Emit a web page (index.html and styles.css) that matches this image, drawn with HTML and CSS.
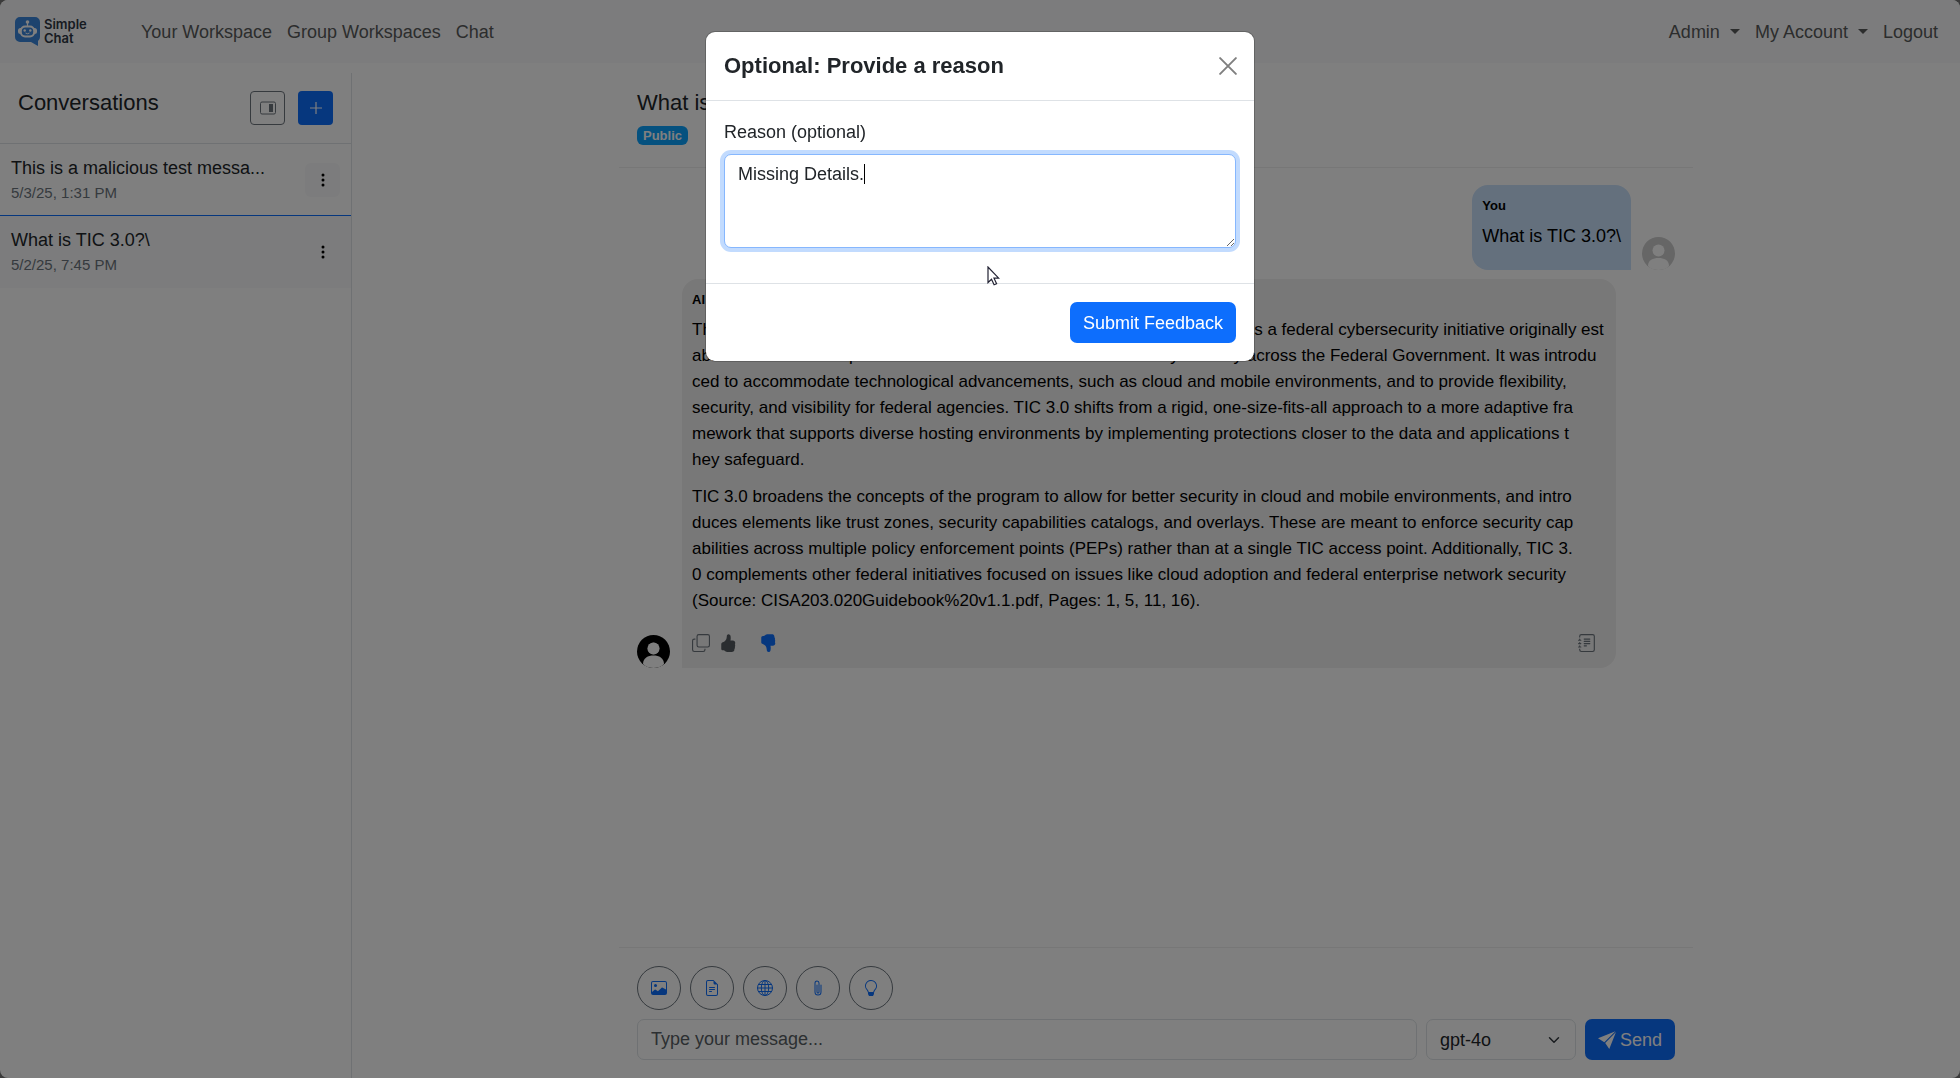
FILE: index.html
```
<!DOCTYPE html>
<html lang="en">
<head>
<meta charset="utf-8">
<title>Simple Chat</title>
<meta name="viewport" content="width=device-width, initial-scale=1">
<link rel="stylesheet" href="styles.css">
</head>
<body>
<div class="app">
  <header class="navbar">
    <a class="brand" href="#" aria-label="Simple Chat">
      <svg class="brand-mark" viewBox="0 0 25 29" aria-hidden="true">
        <path fill="#3a86dc" d="M5 0h15a5 5 0 0 1 5 5v15a5 5 0 0 1-2 4v5l-7-4H5a5 5 0 0 1-5-5V5a5 5 0 0 1 5-5z"/>
        <circle cx="12.500" cy="5" r="1.800" fill="#fff"/>
        <path d="M12.500 5v4" stroke="#fff" stroke-width="1.200"/>
        <rect x="3" y="11" width="19" height="6" rx="2.500" fill="#fff"/>
        <rect x="5" y="8.500" width="15" height="12" rx="5" fill="#fff"/>
        <rect x="6.800" y="10.500" width="11.400" height="8" rx="3.500" fill="#3a86dc"/>
        <circle cx="9.700" cy="13.500" r="1.200" fill="#fff"/>
        <circle cx="15.300" cy="13.500" r="1.200" fill="#fff"/>
        <path d="M10.500 16q2 1.500 4 0" fill="none" stroke="#fff" stroke-width="1"/>
      </svg>
      <span class="brand-name">Simple<br>Chat</span>
    </a>
    <nav class="nav-links">
      <a href="#">Your Workspace</a>
      <a href="#">Group Workspaces</a>
      <a href="#">Chat</a>
    </nav>
    <nav class="nav-links nav-account">
      <a class="has-menu" href="#">Admin</a>
      <a class="has-menu" href="#">My Account</a>
      <a href="#">Logout</a>
    </nav>
  </header>

  <div class="workspace">
    <aside class="sidebar">
      <div class="sidebar-head">
        <h2 class="heading">Conversations</h2>
        <div class="sidebar-actions">
          <button class="square-btn outline" type="button" aria-label="Toggle layout">
            <svg width="16" height="16" viewBox="0 0 16 16" fill="none"><rect x=".5" y="2" width="15" height="12" rx="1.500" stroke="currentColor"/><path fill="currentColor" d="M9 4h4v8H9z"/></svg>
          </button>
          <button class="square-btn primary" type="button" aria-label="New conversation">
            <svg width="16" height="16" viewBox="0 0 16 16"><path d="M8 2v12M2 8h12" stroke="currentColor" stroke-width="1.200"/></svg>
          </button>
        </div>
      </div>
      <ul class="conversations">
        <li class="conversation">
          <div><span class="title">This is a malicious test messa...</span><span class="date">5/3/25, 1:31 PM</span></div>
          <button class="square-btn dots shaded" type="button" aria-label="Conversation options">
            <svg width="16" height="16" viewBox="0 0 16 16" fill="currentColor"><circle cx="8" cy="3" r="1.500"/><circle cx="8" cy="8" r="1.500"/><circle cx="8" cy="13" r="1.500"/></svg>
          </button>
        </li>
        <li class="conversation active">
          <div><span class="title">What is TIC 3.0?\</span><span class="date">5/2/25, 7:45 PM</span></div>
          <button class="square-btn dots" type="button" aria-label="Conversation options">
            <svg width="16" height="16" viewBox="0 0 16 16" fill="currentColor"><circle cx="8" cy="3" r="1.500"/><circle cx="8" cy="8" r="1.500"/><circle cx="8" cy="13" r="1.500"/></svg>
          </button>
        </li>
      </ul>
    </aside>

    <main class="chat">
      <div class="chat-head">
        <h2 class="heading">What is TIC 3.0?\</h2>
        <span class="badge">Public</span>
      </div>

      <div class="messages">
        <article class="message mine">
          <div class="bubble">
            <div class="sender">You</div>
            <p class="own-text">What is TIC 3.0?\</p>
          </div>
          <svg class="avatar" viewBox="0 0 33 33" aria-hidden="true"><circle cx="16.500" cy="16.500" r="16.500" fill="#ccc"/><circle cx="16.500" cy="13.500" r="6" fill="#fff"/><path fill="#fff" d="M6 29c0-6 5-8 10.500-8S27 23 27 29c-3 3-7 4-10.500 4S9 32 6 29z"/></svg>
        </article>

        <article class="message">
          <svg class="avatar" viewBox="0 0 33 33" aria-hidden="true"><circle cx="16.500" cy="16.500" r="16.500" fill="#000"/><circle cx="16.500" cy="13.500" r="6" fill="#808080"/><path fill="#fff" d="M6 29c0-6 5-8.500 10.500-8.500S27 23 27 29c-3 3-7 4-10.500 4S9 32 6 29z"/><circle cx="16.500" cy="13.500" r="6" fill="#fff"/></svg>
          <div class="bubble">
            <div class="sender">AI</div>
            <p>The Trusted Internet Connections (TIC) 3.0, which is maintained by CISA, is a federal cybersecurity initiative originally est<br>ablished in 2007 to optimize and enhance network and boundary security across the Federal Government. It was introdu<br>ced to accommodate technological advancements, such as cloud and mobile environments, and to provide flexibility,<br>security, and visibility for federal agencies. TIC 3.0 shifts from a rigid, one-size-fits-all approach to a more adaptive fra<br>mework that supports diverse hosting environments by implementing protections closer to the data and applications t<br>hey safeguard.</p>
            <p>TIC 3.0 broadens the concepts of the program to allow for better security in cloud and mobile environments, and intro<br>duces elements like trust zones, security capabilities catalogs, and overlays. These are meant to enforce security cap<br>abilities across multiple policy enforcement points (PEPs) rather than at a single TIC access point. Additionally, TIC 3.<br>0 complements other federal initiatives focused on issues like cloud adoption and federal enterprise network security<br>(Source: CISA203.020Guidebook%20v1.1.pdf, Pages: 1, 5, 11, 16).</p>
            <div class="feedback">
              <button type="button" class="copy" aria-label="Copy"><svg width="18" height="18" viewBox="0 0 16 16" fill="currentColor"><path fill-rule="evenodd" d="M4 2a2 2 0 0 1 2-2h8a2 2 0 0 1 2 2v8a2 2 0 0 1-2 2H6a2 2 0 0 1-2-2zm2-1a1 1 0 0 0-1 1v8a1 1 0 0 0 1 1h8a1 1 0 0 0 1-1V2a1 1 0 0 0-1-1zM2 5a1 1 0 0 0-1 1v8a1 1 0 0 0 1 1h8a1 1 0 0 0 1-1v-1h1v1a2 2 0 0 1-2 2H2a2 2 0 0 1-2-2V6a2 2 0 0 1 2-2h1v1z"/></svg></button>
              <button type="button" class="up" aria-label="Thumbs up"><svg width="18" height="18" viewBox="0 0 16 16" fill="currentColor"><path d="M6.956 1.745C7.021.81 7.908.087 8.864.325l.261.066c.463.116.874.456 1.012.965.22.816.533 2.511.062 4.510a10 10 0 0 1 .443-.051c.713-.065 1.669-.072 2.516.210.518.173.994.681 1.200 1.273.184.532.160 1.162-.234 1.733q.086.180.138.363c.077.270.113.567.113.856s-.036.586-.113.856c-.039.135-.090.273-.160.404.169.387.107.819-.003 1.148a3.200 3.200 0 0 1-.488.901c.054.152.076.312.076.465 0 .305-.089.625-.253.912C13.100 15.522 12.437 16 11.500 16H8c-.605 0-1.070-.081-1.466-.218a4.800 4.800 0 0 1-.970-.484l-.048-.030c-.504-.307-.999-.609-2.068-.722C2.682 14.464 2 13.846 2 13V9c0-.850.685-1.432 1.357-1.615.849-.232 1.574-.787 2.132-1.410.560-.627.914-1.280 1.039-1.639.199-.575.356-1.539.428-2.590z"/></svg></button>
              <button type="button" class="down" aria-label="Thumbs down"><svg width="18" height="18" viewBox="0 0 16 16" fill="currentColor"><path d="M6.956 14.534c.065.936.952 1.659 1.908 1.420l.261-.065a1.380 1.380 0 0 0 1.012-.965c.220-.816.533-2.512.062-4.510q.205.030.443.051c.713.065 1.669.071 2.516-.211.518-.173.994-.680 1.200-1.272a1.900 1.900 0 0 0-.234-1.734c.058-.118.103-.242.138-.362.077-.270.113-.568.113-.856 0-.290-.036-.586-.113-.857a2 2 0 0 0-.160-.403c.169-.387.107-.820-.003-1.149a3.200 3.200 0 0 0-.488-.900c.054-.153.076-.313.076-.465a1.860 1.860 0 0 0-.253-.912C13.100.757 12.437.280 11.500.280H8c-.605 0-1.070.080-1.466.217a4.800 4.800 0 0 0-.970.485l-.048.029c-.504.308-.999.610-2.068.723C2.682 1.815 2 2.434 2 3.279v4c0 .851.685 1.433 1.357 1.616.849.232 1.574.787 2.132 1.410.560.626.914 1.280 1.039 1.638.199.575.356 1.540.428 2.591"/></svg></button>
              <button type="button" class="sources" aria-label="Show sources"><svg width="18" height="18" viewBox="0 0 16 16" fill="currentColor"><path d="M5 10.500a.5.500 0 0 1 .5-.500h2a.5.500 0 0 1 0 1h-2a.5.500 0 0 1-.5-.500m0-2a.5.500 0 0 1 .5-.500h5a.5.500 0 0 1 0 1h-5a.5.500 0 0 1-.5-.500m0-2a.5.500 0 0 1 .5-.500h5a.5.500 0 0 1 0 1h-5a.5.500 0 0 1-.5-.500m0-2a.5.500 0 0 1 .5-.500h5a.5.500 0 0 1 0 1h-5a.5.500 0 0 1-.5-.500"/><path d="M3 0h10a2 2 0 0 1 2 2v12a2 2 0 0 1-2 2H3a2 2 0 0 1-2-2v-1h1v1a1 1 0 0 0 1 1h10a1 1 0 0 0 1-1V2a1 1 0 0 0-1-1H3a1 1 0 0 0-1 1v1H1V2a2 2 0 0 1 2-2"/><path d="M1 5v-.500a.5.500 0 0 1 1 0V5h.5a.5.500 0 0 1 0 1h-2a.5.500 0 0 1 0-1zm0 3v-.500a.5.500 0 0 1 1 0V8h.5a.5.500 0 0 1 0 1h-2a.5.500 0 0 1 0-1zm0 3v-.500a.5.500 0 0 1 1 0v.500h.5a.5.500 0 0 1 0 1h-2a.5.500 0 0 1 0-1z"/></svg></button>
            </div>
          </div>
        </article>
      </div>

      <form class="composer">
        <div class="tools">
          <button type="button" aria-label="Generate image"><svg width="16" height="16" viewBox="0 0 16 16" fill="currentColor"><path d="M6.002 5.500a1.500 1.500 0 1 1-3 0 1.500 1.500 0 0 1 3 0"/><path d="M2.002 1a2 2 0 0 0-2 2v10a2 2 0 0 0 2 2h12a2 2 0 0 0 2-2V3a2 2 0 0 0-2-2zm12 1a1 1 0 0 1 1 1v6.500l-3.777-1.947a.5.500 0 0 0-.577.093l-3.710 3.710-2.660-1.772a.5.500 0 0 0-.630.062L1.002 12V3a1 1 0 0 1 1-1z"/></svg></button>
          <button type="button" aria-label="Search documents"><svg width="16" height="16" viewBox="0 0 16 16" fill="currentColor"><path d="M5.500 7a.5.500 0 0 0 0 1h5a.5.500 0 0 0 0-1zM5 9.500a.5.500 0 0 1 .5-.500h5a.5.500 0 0 1 0 1h-5a.5.500 0 0 1-.5-.500m0 2a.5.500 0 0 1 .5-.500h2a.5.500 0 0 1 0 1h-2a.5.500 0 0 1-.5-.500"/><path d="M9.500 0H4a2 2 0 0 0-2 2v12a2 2 0 0 0 2 2h8a2 2 0 0 0 2-2V4.500zm0 1v2A1.500 1.500 0 0 0 11 4.500h2V14a1 1 0 0 1-1 1H4a1 1 0 0 1-1-1V2a1 1 0 0 1 1-1z"/></svg></button>
          <button type="button" aria-label="Search the web"><svg width="16" height="16" viewBox="0 0 16 16" fill="none" stroke="currentColor"><circle cx="8" cy="8" r="7.500"/><ellipse cx="8" cy="8" rx="3.700" ry="7.500"/><path d="M8 .5v15M.5 8h15M1.500 4.500h13M1.500 11.500h13"/></svg></button>
          <button type="button" aria-label="Attach file"><svg width="16" height="16" viewBox="0 0 16 16" fill="currentColor"><path d="M4.500 3a2.500 2.500 0 0 1 5 0v9a1.500 1.500 0 0 1-3 0V5a.5.500 0 0 1 1 0v7a.5.500 0 0 0 1 0V3a1.500 1.500 0 1 0-3 0v9a2.500 2.500 0 0 0 5 0V5a.5.500 0 0 1 1 0v7a3.500 3.500 0 1 1-7 0z"/></svg></button>
          <button type="button" aria-label="Prompts"><svg width="16" height="16" viewBox="0 0 16 16" fill="currentColor"><path d="M2 6a6 6 0 1 1 10.174 4.310c-.203.196-.359.400-.453.619l-.762 1.769A.5.500 0 0 1 10.500 13h-5a.5.500 0 0 1-.460-.302l-.761-1.770a2 2 0 0 0-.453-.618A5.980 5.980 0 0 1 2 6m6-5a5 5 0 0 0-3.479 8.592c.263.254.514.564.676.941L5.830 12h4.342l.632-1.467c.162-.377.413-.687.676-.941A5 5 0 0 0 8 1M5 13h6v1l-1 2H6l-1-2z"/></svg></button>
        </div>
        <div class="compose-row">
          <input class="field" type="text" placeholder="Type your message..." aria-label="Message">
          <select class="field model" aria-label="Model"><option>gpt-4o</option></select>
          <button class="btn primary" type="button"><svg width="18" height="18" viewBox="0 0 16 16" fill="currentColor"><path d="M0 6.500L15.500.300 5.600 9.900zM6.400 10.600L16 .800 10 16z"/></svg>Send</button>
        </div>
      </form>
    </main>
  </div>
</div>

<div class="backdrop">
  <form class="modal" role="dialog" aria-modal="true" aria-labelledby="feedback-title">
    <div class="modal-head">
      <h1 id="feedback-title">Optional: Provide a reason</h1>
      <button class="close" type="button" aria-label="Close"><svg width="18" height="18" viewBox="0 0 16 16" fill="none"><path d="M1 1l14 14M15 1L1 15" stroke="currentColor" stroke-width="1.700" stroke-linecap="round"/></svg></button>
    </div>
    <div class="modal-body">
      <label for="reason">Reason (optional)</label>
      <div class="reason-box">
        <textarea id="reason" rows="3">Missing Details.</textarea>
        <span class="caret"></span>
      </div>
    </div>
    <div class="modal-foot">
      <button class="btn primary" type="button">Submit Feedback</button>
    </div>
    <svg class="pointer" width="13" height="20" viewBox="0 0 13 20" aria-hidden="true"><path d="M1 1v15.500l3.500-3.300 2.600 5.600 2.500-1.100-2.600-5.500h4.700z" fill="#fff" stroke="#223" stroke-width="1.200"/></svg>
  </form>
</div>
</body>
</html>
```
FILE: styles.css
```
* { box-sizing: border-box; }

html { background: #777; }

body {
  margin: 0;
  color: #212529;
  font: 18px/26px "Liberation Sans", Arial, sans-serif;
}

h1, h2, p, ul { margin: 0; padding: 0; font-weight: 400; }
a { color: inherit; text-decoration: none; }
button, input, select, textarea { font: inherit; color: inherit; }
button {
  display: flex;
  align-items: center;
  justify-content: center;
  padding: 0;
  border: 0;
  background: none;
}
svg { display: block; flex: none; }

.app {
  display: flex;
  flex-direction: column;
  height: 100vh;
  overflow: hidden;
  border-radius: 8px;
  background: #fff;
}

/* Top bar */
.navbar {
  display: flex;
  align-items: center;
  height: 63px;
  flex: none;
  padding: 0 22px 0 15px;
  background: #f8f9fa;
  color: #595a5b;
}
.brand { display: flex; gap: 4px; width: 126px; }
.brand-mark { width: 25px; height: 29px; }
.brand-name {
  color: #2f3644;
  font: 600 13px/14px Inter, "Liberation Sans", sans-serif;
}
.nav-links { display: flex; gap: 15px; }
.nav-account { margin-left: auto; }
.has-menu { display: flex; align-items: center; gap: 10px; }
.has-menu::after {
  content: "";
  border: 5px solid transparent;
  border-top-color: currentColor;
  border-bottom: 0;
}

.workspace { display: flex; flex: 1; min-height: 0; padding-top: 10px; }

/* Conversation list */
.sidebar { width: 352px; flex: none; border-right: 1px solid #dee2e6; }
.sidebar-head {
  display: flex;
  justify-content: space-between;
  height: 71px;
  padding: 17px 18px;
  border-bottom: 1px solid #dee2e6;
}
.heading { font-size: 22px; line-height: 26px; }
.sidebar-actions { display: flex; gap: 13px; padding-top: 1px; }
.square-btn { width: 35px; height: 34px; border-radius: 4px; }
.outline { border: 1px solid #6c757d; color: #6c757d; }
.primary { background: #0d6efd; color: #fff; }
.dots { color: #000; border-radius: 6px; }
.shaded { background: #f8f9fa; }
.conversations { list-style: none; }
.conversation {
  display: flex;
  align-items: center;
  justify-content: space-between;
  height: 72px;
  padding: 0 11px;
  border-bottom: 1px solid #0d6efd;
}
.conversation.active { background: #f8f9fa; border-bottom-color: #f8f9fa; }
.title, .date { display: block; }
.date { color: #6c757d; font-size: 15px; line-height: 24px; }

/* Chat */
.chat {
  display: flex;
  flex-direction: column;
  width: 100%;
  max-width: 1074px;
  min-width: 0;
  margin: 0 auto;
}
.chat-head {
  display: flex;
  flex-direction: column;
  align-items: flex-start;
  gap: 10px;
  height: 95px;
  padding: 17px 18px;
  border-bottom: 1px solid #eee;
}
.badge {
  padding: 0 6px;
  border-radius: 6px;
  background: #0aa2ff;
  color: #fff;
  font-size: 13px;
  font-weight: 700;
  line-height: 19px;
}
.messages {
  display: flex;
  flex-direction: column;
  gap: 9px;
  flex: 1;
  min-height: 0;
  padding: 17px 18px;
  color: #000;
}
.message { display: flex; align-items: flex-end; gap: 12px; }
.mine { justify-content: flex-end; gap: 11px; }
.avatar { width: 33px; height: 33px; }
.bubble {
  max-width: 90%;
  padding: 12px 10px 16px;
  border-radius: 16px 16px 16px 0;
  background: #f1f0f0;
}
.message:not(.mine) .bubble { width: 90%; }
.mine .bubble { padding-bottom: 21px; border-radius: 16px 16px 0 16px; background: #c8e0fa; }
.sender { margin-bottom: 8px; font-size: 13px; font-weight: 700; line-height: 18px; }
.bubble p { margin-bottom: 11px; font-size: 17px; white-space: nowrap; }
.bubble .own-text { margin: 0; font-size: 18px; }
.feedback { display: flex; margin-top: 20px; color: #6c757d; }
.up { margin-left: 9px; color: #555b60; }
.down { margin-left: 22px; color: #0d6efd; }
.sources { margin-left: auto; margin-right: 10px; }

/* Composer */
.composer { padding: 18px; border-top: 1px solid #eee; }
.tools { display: flex; gap: 9px; margin-bottom: 9px; }
.tools button {
  width: 44px;
  height: 44px;
  border: 1px solid #6c757d;
  border-radius: 50%;
  color: #0d6efd;
}
.compose-row { display: flex; gap: 9px; }
.field {
  flex: 1;
  min-width: 0;
  height: 41px;
  padding: 0 13px;
  border: 1px solid #dee2e6;
  border-radius: 7px;
  background: #fff;
}
.field::placeholder { color: #595f64; opacity: 1; }
.model {
  flex: 0 0 150px;
  appearance: none;
  background: #fff url("data:image/svg+xml,%3Csvg xmlns='http://www.w3.org/2000/svg' viewBox='0 0 16 16'%3E%3Cpath fill='none' stroke='%23343a40' stroke-linecap='round' stroke-linejoin='round' stroke-width='2' d='m2 5 6 6 6-6'/%3E%3C/svg%3E") no-repeat right 13px center / 16px 12px;
}
.btn { gap: 4px; height: 41px; padding: 0 13px; border-radius: 7px; }

/* Feedback dialog */
.backdrop { position: fixed; inset: 0; padding: 32px 16px; background: rgba(0, 0, 0, .5); }
.modal {
  position: relative;
  max-width: 548px;
  margin: 0 auto;
  border-radius: 9px;
  background: #fff;
  box-shadow: 0 0 0 1px rgba(0, 0, 0, .2);
}
.modal-head {
  display: flex;
  align-items: center;
  justify-content: space-between;
  height: 69px;
  padding: 0 17px 1px 18px;
  border-bottom: 1px solid #dee2e6;
}
.modal-head h1 { font-size: 22px; font-weight: 700; line-height: 33px; }
.close { color: #7f7f7f; }
.modal-body { padding: 18px 18px 35px; }
.modal-body label { display: block; margin-bottom: 9px; }
.reason-box { position: relative; display: flex; }
textarea {
  width: 100%;
  height: 94px;
  padding: 6px 13px;
  border: 1px solid #86b7fe;
  border-radius: 7px;
  outline: 0;
  box-shadow: 0 0 0 4px #c2dbfe;
  resize: vertical;
}
.caret { position: absolute; left: 140px; top: 10px; width: 1px; height: 20px; background: #000; }
.modal-foot {
  display: flex;
  justify-content: flex-end;
  padding: 18px;
  border-top: 1px solid #dee2e6;
}
.pointer { position: absolute; left: 281px; top: 234px; }
```
